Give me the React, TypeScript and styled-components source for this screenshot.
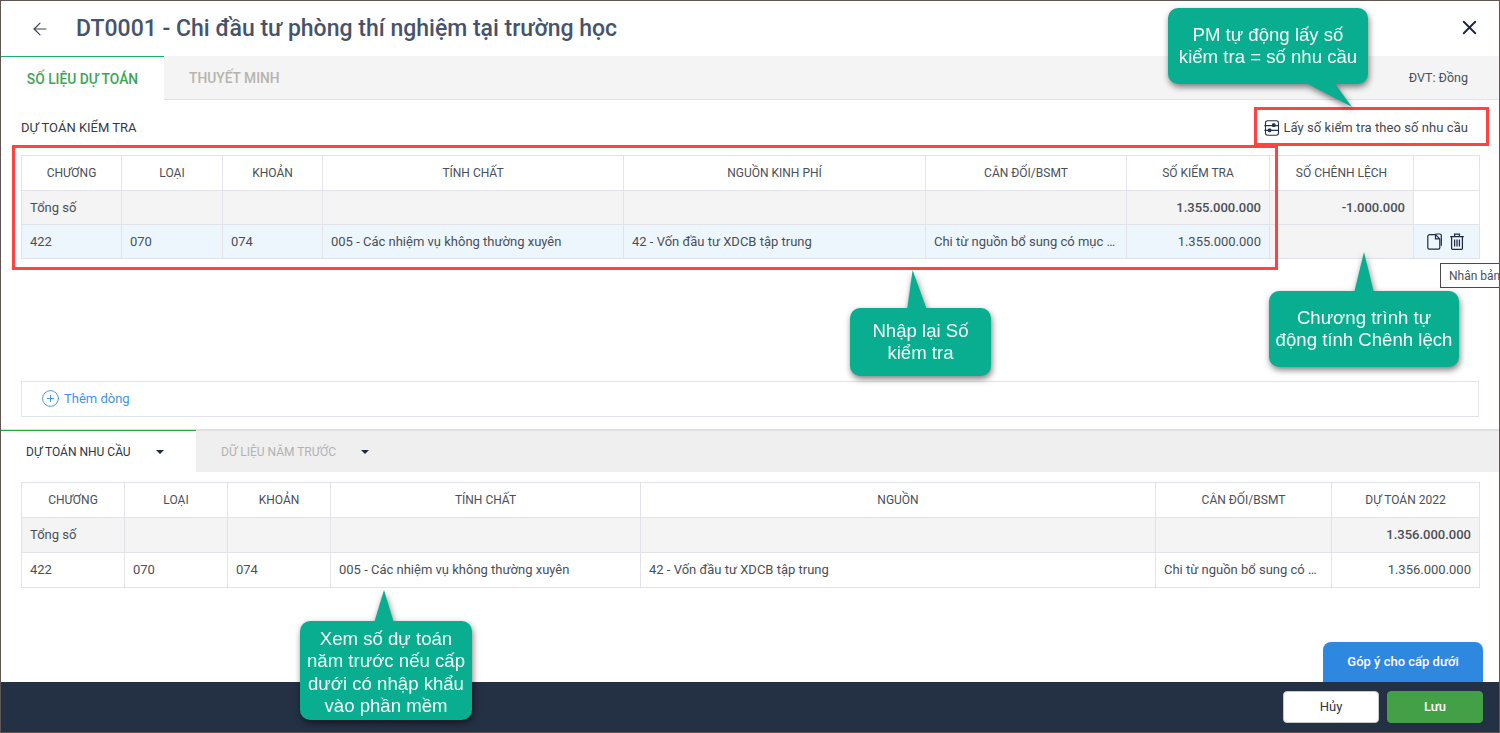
import React from "react";
import styled, { createGlobalStyle } from "styled-components";
import { ArrowLeft, CirclePlus, X } from "lucide-react";

const GlobalStyle = createGlobalStyle`
  html, body {
    margin: 0;
    padding: 0;
    background: #fff;
  }
  body {
    font-family: Roboto, "Liberation Sans", sans-serif;
    color: #3f4650;
  }
`;

type Align = "left" | "center" | "right";
type Tone = "white" | "gray" | "blue";

type CellData = {
  text?: string;
  align?: Align;
  tone?: Tone;
  bold?: boolean;
  actions?: boolean;
};

const toneColor: Record<Tone, string> = {
  white: "#ffffff",
  gray: "#f4f4f4",
  blue: "#eef6fd",
};

const checkCols = [100, 101, 100, 301, 302, 201, 143, 144, 66];
const checkHead = [
  "Chương",
  "Loại",
  "Khoản",
  "Tính chất",
  "Nguồn kinh phí",
  "Cân đối/BSMT",
  "Số kiểm tra",
  "Số chênh lệch",
  "",
];
const checkRows: CellData[][] = [
  [
    { text: "Tổng số", tone: "gray" },
    { tone: "gray" },
    { tone: "gray" },
    { tone: "gray" },
    { tone: "gray" },
    { tone: "gray" },
    { text: "1.355.000.000", align: "right", tone: "gray", bold: true },
    { text: "-1.000.000", align: "right", tone: "gray", bold: true },
    { tone: "white" },
  ],
  [
    { text: "422", tone: "blue" },
    { text: "070", tone: "blue" },
    { text: "074", tone: "blue" },
    { text: "005 - Các nhiệm vụ không thường xuyên", tone: "blue" },
    { text: "42 - Vốn đầu tư XDCB tập trung", tone: "blue" },
    { text: "Chi từ nguồn bổ sung có mục …", tone: "blue" },
    { text: "1.355.000.000", align: "right", tone: "blue" },
    { tone: "gray" },
    { tone: "blue", actions: true },
  ],
];

const needCols = [103, 103, 103, 310, 515, 176, 148];
const needHead = ["Chương", "Loại", "Khoản", "Tính chất", "Nguồn", "Cân đối/BSMT", "Dự toán 2022"];
const needRows: CellData[][] = [
  [
    { text: "Tổng số", tone: "gray" },
    { tone: "gray" },
    { tone: "gray" },
    { tone: "gray" },
    { tone: "gray" },
    { tone: "gray" },
    { text: "1.356.000.000", align: "right", tone: "gray", bold: true },
  ],
  [
    { text: "422" },
    { text: "070" },
    { text: "074" },
    { text: "005 - Các nhiệm vụ không thường xuyên" },
    { text: "42 - Vốn đầu tư XDCB tập trung" },
    { text: "Chi từ nguồn bổ sung có …" },
    { text: "1.356.000.000", align: "right" },
  ],
];

const SlidersIcon = () => (
  <svg width="16" height="16" viewBox="0 0 16 16" fill="none" stroke="#26324a" strokeWidth="1.1">
    <rect x="1.5" y="0.8" width="13" height="14.4" rx="2.2" />
    <path d="M0.4 5.6h14M0.4 10.4h14" />
    <rect x="8.6" y="3.9" width="2.4" height="2.6" rx="0.6" fill="#26324a" />
    <rect x="4.4" y="9" width="2.4" height="2.6" rx="0.6" fill="#26324a" />
  </svg>
);

const CopyIcon = () => (
  <svg width="15" height="17" viewBox="0 0 15 17" fill="none" stroke="#1d2a44" strokeWidth="1.2">
    <path d="M2.8 1.6h5.7l4.3 4.3v8.9a1.4 1.4 0 0 1-1.4 1.4H2.2a1.4 1.4 0 0 1-1.4-1.4V3.6a2 2 0 0 1 2-2z" />
    <path d="M8.5 1.6v4.3h4.3" />
    <path d="M8.5 1h4.3a1.5 1.5 0 0 1 1.5 1.5v10.3" />
  </svg>
);

const TrashIcon = () => (
  <svg width="14" height="17" viewBox="0 0 14 17" fill="none" stroke="#1d2a44" strokeWidth="1.25">
    <path d="M0.2 3.6h13.6M4.6 3.4V1.2h4.8v2.2" />
    <path d="M1.6 3.6v11.6a1.2 1.2 0 0 0 1.2 1.2h8.4a1.2 1.2 0 0 0 1.2-1.2V3.6" />
    <path d="M4.6 6.6v7M7 6.6v7M9.4 6.6v7" />
  </svg>
);

const DataTable = ({
  cols,
  head,
  rows,
  roomy,
}: {
  cols: number[];
  head: string[];
  rows: CellData[][];
  roomy?: boolean;
}) => (
  <Table>
    <colgroup>
      {cols.map((w, i) => (
        <col key={i} width={w} />
      ))}
    </colgroup>
    <thead>
      <tr>
        {head.map((h, i) => (
          <HeadCell key={i}>{h}</HeadCell>
        ))}
      </tr>
    </thead>
    <tbody>
      {rows.map((row, r) => (
        <tr key={r}>
          {row.map((cell, c) => (
            <BodyCell
              key={c}
              $align={cell.align}
              $tone={cell.tone}
              $bold={cell.bold}
              $roomy={roomy}
            >
              {cell.actions ? (
                <ActionIcons>
                  <CopyIcon />
                  <TrashIcon />
                </ActionIcons>
              ) : (
                <CellText>{cell.text}</CellText>
              )}
            </BodyCell>
          ))}
        </tr>
      ))}
    </tbody>
  </Table>
);

export default function App() {
  return (
    <>
      <GlobalStyle />
      <Frame>
        <TitleBar>
          <BackButton>
            <ArrowLeft size={20} strokeWidth={1.4} />
          </BackButton>
          <Title>DT0001 - Chi đầu tư phòng thí nghiệm tại trường học</Title>
          <CloseButton>
            <X size={23} strokeWidth={1.9} />
          </CloseButton>
        </TitleBar>

        <TabBar>
          <MainTab $active>Số liệu dự toán</MainTab>
          <MainTab>Thuyết minh</MainTab>
          <Unit>ĐVT: Đồng</Unit>
        </TabBar>

        <Section>
          <SectionHead>
            <SectionTitle>Dự toán kiểm tra</SectionTitle>
            <FetchLink>
              <SlidersIcon />
              Lấy số kiểm tra theo số nhu cầu
            </FetchLink>
          </SectionHead>
          <DataTable cols={checkCols} head={checkHead} rows={checkRows} />
          <AddRow>
            <CirclePlus size={19} strokeWidth={1.2} />
            Thêm dòng
          </AddRow>
        </Section>

        <LowerTabs>
          <LowerTab $active>
            Dự toán nhu cầu
            <Caret />
          </LowerTab>
          <LowerTab>
            Dữ liệu năm trước
            <Caret />
          </LowerTab>
        </LowerTabs>

        <LowerBody>
          <DataTable cols={needCols} head={needHead} rows={needRows} roomy />
          <FeedbackRow>
            <FeedbackButton>Góp ý cho cấp dưới</FeedbackButton>
          </FeedbackRow>
        </LowerBody>

        <Footer>
          <CancelButton>Hủy</CancelButton>
          <SaveButton>Lưu</SaveButton>
        </Footer>

        <RedBox $x={11} $y={144} $w={1266} $h={125} />
        <RedBox $x={1253} $y={106} $w={235} $h={39} />

        <Tooltip>Nhân bản</Tooltip>

        <Callout $x={1167} $y={7} $w={200} $h={76} $pad={16}>
          <Tail $x={136} $y={74} $w={48} $h={25} $clip="0 0, 62% 0, 100% 100%" />
          PM tự động lấy số
          <br />
          kiểm tra = số nhu cầu
        </Callout>
        <Callout $x={1268} $y={290} $w={190} $h={76} $pad={16}>
          <Tail $x={85} $y={-39} $w={20} $h={41} $clip="50% 0, 100% 100%, 0 100%" />
          Chương trình tự
          <br />
          động tính Chênh lệch
        </Callout>
        <Callout $x={849} $y={307} $w={141} $h={68} $pad={12}>
          <Tail $x={57} $y={-38} $w={20} $h={40} $clip="28% 0, 100% 100%, 0 100%" />
          Nhập lại Số
          <br />
          kiểm tra
        </Callout>
        <Callout $x={299} $y={620} $w={172} $h={99} $pad={7}>
          <Tail $x={74} $y={-31} $w={20} $h={33} $clip="50% 0, 100% 100%, 0 100%" />
          Xem số dự toán
          <br />
          năm trước nếu cấp
          <br />
          dưới có nhập khẩu
          <br />
          vào phần mềm
        </Callout>
      </Frame>
    </>
  );
}

const Frame = styled.div`
  position: relative;
  width: 1500px;
  height: 733px;
  box-sizing: border-box;
  border: 1px solid #5f5553;
  background: #fff;
  display: flex;
  flex-direction: column;
  overflow: hidden;
`;

const TitleBar = styled.header`
  height: 55px;
  flex: none;
  display: flex;
  align-items: center;
  padding: 0 18px 0 29px;
`;

const BackButton = styled.div`
  width: 46px;
  display: flex;
  color: #36435a;
`;

const Title = styled.h1`
  margin: 0;
  font-size: 23px;
  font-weight: 500;
  color: #46536a;
`;

const CloseButton = styled.div`
  margin-left: auto;
  display: flex;
  color: #18233a;
  margin-top: -3px;
`;

const TabBar = styled.nav`
  height: 44px;
  flex: none;
  box-sizing: border-box;
  display: flex;
  align-items: stretch;
  background: #f4f4f4;
  border-bottom: 1px solid #e2e2e2;
`;

const MainTab = styled.div<{ $active?: boolean }>`
  box-sizing: border-box;
  height: ${(p) => (p.$active ? "44px" : "43px")};
  width: ${(p) => (p.$active ? "163px" : "auto")};
  padding: 0 ${(p) => (p.$active ? "0" : "25px")};
  display: flex;
  align-items: center;
  justify-content: center;
  font-size: 13.8px;
  font-weight: 500;
  text-transform: uppercase;
  color: ${(p) => (p.$active ? "#3aa655" : "#b7b3ae")};
  background: ${(p) => (p.$active ? "#fff" : "transparent")};
  border-top: 1px solid ${(p) => (p.$active ? "#18b26b" : "transparent")};
`;

const Unit = styled.div`
  margin-left: auto;
  align-self: center;
  padding-right: 31px;
  font-size: 12.5px;
  color: #46505c;
`;

const Section = styled.section`
  flex: none;
  padding: 0 20px;
  height: 329px;
`;

const SectionHead = styled.div`
  height: 55px;
  display: flex;
  align-items: center;
  justify-content: space-between;
`;

const SectionTitle = styled.h2`
  margin: 0;
  font-size: 13px;
  font-weight: 400;
  text-transform: uppercase;
  color: #333a44;
`;

const FetchLink = styled.div`
  display: flex;
  align-items: center;
  gap: 3px;
  padding-right: 11px;
  font-size: 13px;
  letter-spacing: 0.06px;
  color: #3f4650;
`;

const Table = styled.table`
  width: 1458px;
  table-layout: fixed;
  border-collapse: collapse;
  font-size: 13px;
`;

const HeadCell = styled.th`
  height: 35px;
  padding: 0 8px 1px;
  box-sizing: border-box;
  border: 1px solid #e2e3e8;
  font-size: 12px;
  font-weight: 400;
  text-transform: uppercase;
  text-align: center;
  color: #4a4f57;
  background: #fff;
`;

const BodyCell = styled.td<{ $align?: Align; $tone?: Tone; $bold?: boolean; $roomy?: boolean }>`
  height: ${(p) => (p.$roomy ? "35px" : "34px")};
  padding: 0 8px ${(p) => (p.$roomy ? "2px" : "0")};
  box-sizing: border-box;
  border: 1px solid #e2e3e8;
  text-align: ${(p) => p.$align ?? "left"};
  font-weight: ${(p) => (p.$bold ? 500 : 400)};
  color: #4a4f57;
  background: ${(p) => toneColor[p.$tone ?? "white"]};
`;

const CellText = styled.div`
  white-space: nowrap;
`;

const ActionIcons = styled.div`
  display: flex;
  justify-content: flex-end;
  gap: 8px;
  margin-right: 7px;
`;

const AddRow = styled.div`
  margin-top: 122px;
  height: 36px;
  box-sizing: border-box;
  border: 1px solid #e2e3e8;
  display: flex;
  align-items: center;
  gap: 4px;
  padding: 0 0 1px 19px;
  font-size: 13px;
  color: #3f93e6;
`;

const LowerTabs = styled.div`
  flex: none;
  height: 43px;
  box-sizing: border-box;
  display: flex;
  background: #efefef;
  border-top: 2px solid #e0e0e0;
`;

const LowerTab = styled.div<{ $active?: boolean }>`
  width: ${(p) => (p.$active ? "195px" : "auto")};
  box-sizing: border-box;
  display: flex;
  align-items: center;
  gap: 25px;
  padding: 0 0 ${(p) => (p.$active ? "0" : "1px")} 25px;
  margin-top: ${(p) => (p.$active ? "-1px" : "0")};
  font-size: 12px;
  text-transform: uppercase;
  color: ${(p) => (p.$active ? "#2d3546" : "#b2b2b2")};
  background: ${(p) => (p.$active ? "#fff" : "transparent")};
  border-top: 1px solid ${(p) => (p.$active ? "#2f9e44" : "transparent")};
`;

const Caret = styled.span`
  width: 0;
  height: 0;
  border-left: 4px solid transparent;
  border-right: 4px solid transparent;
  border-top: 4px solid #1d2a44;
`;

const LowerBody = styled.div`
  flex: 1;
  min-height: 0;
  display: flex;
  flex-direction: column;
  padding: 10px 16px 0 20px;
`;

const FeedbackRow = styled.div`
  margin-top: auto;
  display: flex;
  justify-content: flex-end;
`;

const FeedbackButton = styled.div`
  width: 160px;
  height: 40px;
  box-sizing: border-box;
  padding-bottom: 2px;
  display: flex;
  align-items: center;
  justify-content: center;
  border-radius: 8px 8px 0 0;
  background: #2f88e0;
  color: #fff;
  font-size: 13px;
  font-weight: 500;
`;

const Footer = styled.footer`
  flex: none;
  height: 50px;
  box-sizing: border-box;
  background: #243044;
  display: flex;
  align-items: flex-start;
  justify-content: flex-end;
  gap: 8px;
  padding: 9px 16px 0 0;
`;

const CancelButton = styled.div`
  width: 96px;
  height: 32px;
  display: flex;
  align-items: center;
  justify-content: center;
  box-sizing: border-box;
  padding-bottom: 1px;
  border: 1px solid #c8c8c8;
  border-radius: 4px;
  background: #fff;
  color: #2d3546;
  font-size: 13px;
  font-weight: 400;
`;

const SaveButton = styled(CancelButton)`
  border-color: #43a047;
  background: #43a047;
  color: #fff;
  font-weight: 500;
`;

const RedBox = styled.div<{ $x: number; $y: number; $w: number; $h: number }>`
  position: absolute;
  left: ${(p) => p.$x}px;
  top: ${(p) => p.$y}px;
  width: ${(p) => p.$w}px;
  height: ${(p) => p.$h}px;
  box-sizing: border-box;
  border: 3px solid #ff4343;
  pointer-events: none;
`;

const Tooltip = styled.div`
  position: absolute;
  left: 1439px;
  top: 262px;
  width: 70px;
  height: 25px;
  box-sizing: border-box;
  border: 1px solid #4a4a4a;
  background: #fff;
  padding-left: 8px;
  display: flex;
  align-items: center;
  font-size: 12px;
  color: #4a4f57;
  white-space: nowrap;
`;

const Callout = styled.div<{ $x: number; $y: number; $w: number; $h: number; $pad: number }>`
  position: absolute;
  left: ${(p) => p.$x}px;
  top: ${(p) => p.$y}px;
  width: ${(p) => p.$w}px;
  height: ${(p) => p.$h}px;
  box-sizing: border-box;
  text-align: center;
  padding-top: ${(p) => p.$pad}px;
  background: #08ae8f;
  border-radius: 10px;
  font-family: "Liberation Sans", Arial, sans-serif;
  font-size: 18.6px;
  line-height: 22.3px;
  color: #f4fffb;
  white-space: nowrap;
  filter: drop-shadow(1px 3px 3px rgba(0, 0, 0, 0.5));
`;

const Tail = styled.span<{ $x: number; $y: number; $w: number; $h: number; $clip: string }>`
  position: absolute;
  left: ${(p) => p.$x}px;
  top: ${(p) => p.$y}px;
  width: ${(p) => p.$w}px;
  height: ${(p) => p.$h}px;
  background: #08ae8f;
  clip-path: polygon(${(p) => p.$clip});
`;
